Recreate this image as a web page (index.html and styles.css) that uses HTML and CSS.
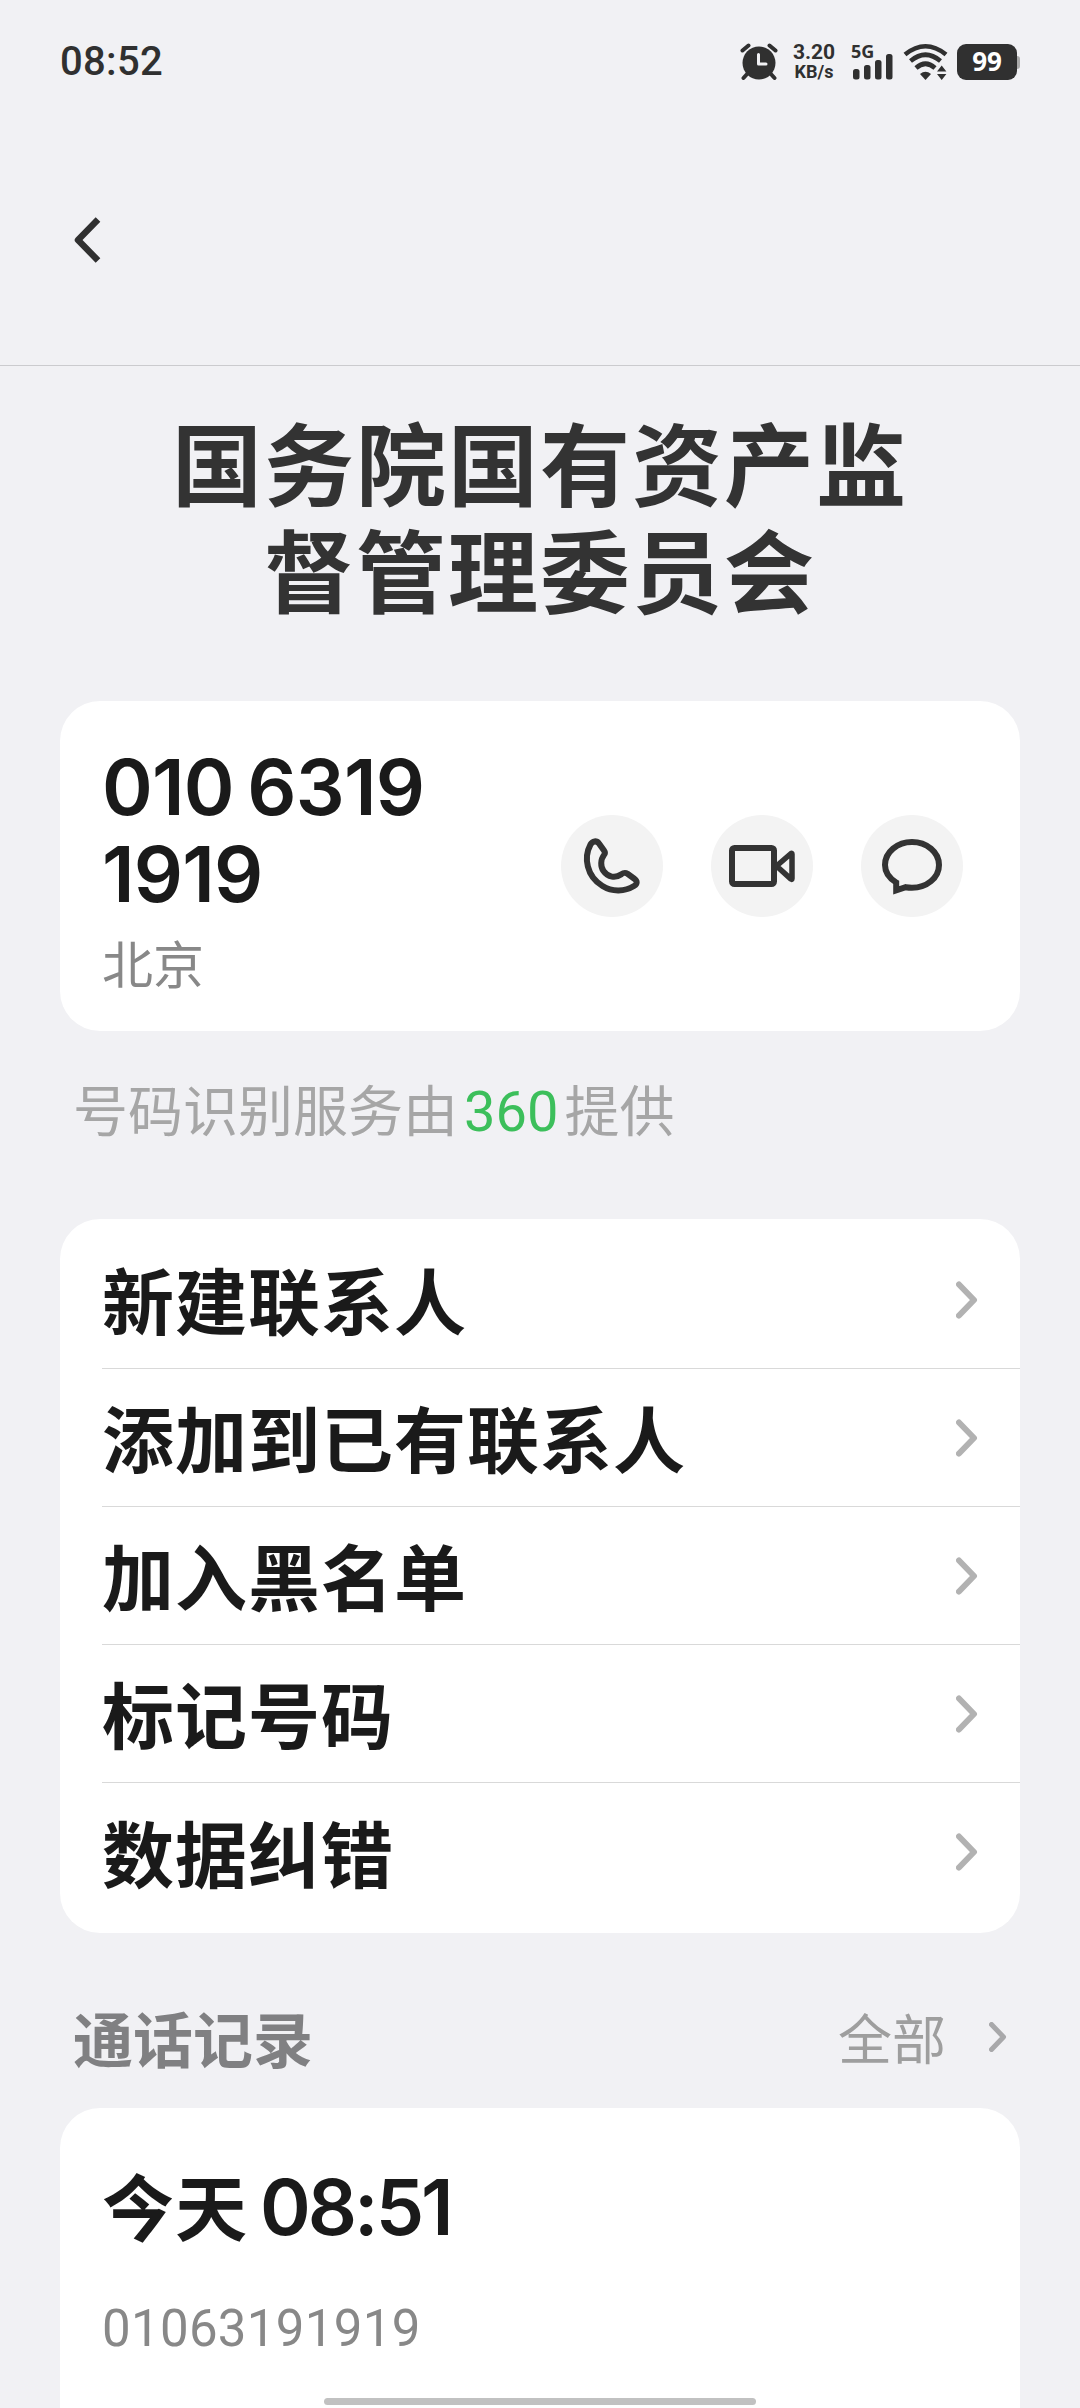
FILE: index.html
```html
<!DOCTYPE html>
<html lang="zh-CN">
<head>
  <meta charset="UTF-8">
  <meta name="viewport" content="width=device-width, initial-scale=1.0">
  <title>联系人详情</title>
  <link rel="stylesheet" href="styles.css">
</head>
<body>
  <div class="screen">

    <div class="status-bar">
      <span class="status-time">08:52</span>
      <div class="status-icons">
        <svg class="alarm-icon" viewBox="0 0 38 38">
          <circle cx="19" cy="20" r="16.500" fill="#303030"/>
          <path d="M2.500 7.500l6-5M35.500 7.500l-6-5M8 30l-4.500 5M30 30l4.500 5" stroke="#303030" stroke-width="4" stroke-linecap="round"/>
          <path d="M18.500 11.500v9.500h7.500" fill="none" stroke="#f1f1f4" stroke-width="3" stroke-linecap="round" stroke-linejoin="round"/>
        </svg>
        <div class="net-speed">
          <span class="speed-value">3.20</span>
          <span class="speed-unit">KB/s</span>
        </div>
        <div class="signal">
          <span class="signal-type">5G</span>
          <svg class="signal-icon" viewBox="0 0 44 38" fill="#303030">
            <rect x="2" y="26" width="6.500" height="10.500" rx="2.500"/>
            <rect x="13" y="22" width="6.500" height="14.500" rx="2.500"/>
            <rect x="24" y="17" width="6.500" height="19.500" rx="2.500"/>
            <rect x="35" y="11" width="6.500" height="25.500" rx="2.500"/>
          </svg>
        </div>
        <svg class="wifi-icon" viewBox="0 0 46 38">
          <g fill="none" stroke="#303030" stroke-width="4.600">
            <path d="M2 11.500Q22.500-5 43 11.500"/>
            <path d="M7.500 18Q22.500 5.500 37.500 18"/>
            <path d="M13 25Q22.500 16.500 32 25"/>
          </g>
          <path d="M17 31q5.500-4.500 11 0l-5.500 6z" fill="#303030"/>
          <path d="M34 28.500l4.700-6 4.700 6zM34 31l4.700 6 4.700-6z" fill="#303030"/>
        </svg>
        <div class="battery">
          <span class="battery-level">99</span>
          <span class="battery-tip"></span>
        </div>
      </div>
    </div>

    <div class="nav-bar">
      <svg class="back-icon" viewBox="0 0 30 48">
        <path d="M25 3.500L5 24l20 20.500" fill="none" stroke="#303030" stroke-width="6.500" stroke-linejoin="round"/>
      </svg>
    </div>

    <h1 class="contact-name">国务院国有资产监<br>督管理委员会</h1>

    <div class="card phone-card">
      <div class="phone-info">
        <div class="phone-number">010 6319<br>1919</div>
        <div class="phone-area">北京</div>
      </div>
      <div class="phone-actions">
        <button class="action-button" aria-label="拨打电话">
          <svg viewBox="0 0 102 102">
            <path d="M29.500 29.500C31.500 25.800 35.500 25.300 38 28.500L43 35.500C44.300 37.300 44.200 38.500 43 40C39.500 44.500 39.300 51.500 42.500 56C47 62.500 54.500 63.300 60 59.500C62.500 57.700 64 57.200 66.500 58.800L73 63.500C76.500 66 76.600 68.800 73 71C64 76.500 51.500 77.300 41.500 71C25.500 61.500 22.500 42.500 29.500 29.500Z"/>
          </svg>
        </button>
        <button class="action-button" aria-label="视频通话">
          <svg viewBox="0 0 102 102">
            <rect x="21" y="33" width="42" height="36" rx="2.500"/>
            <path d="M65.500 51L80 38.500q1-.700 1 .600V63.500q0 1.300-1 .600z" stroke-width="5.500"/>
          </svg>
        </button>
        <button class="action-button" aria-label="发送短信">
          <svg viewBox="0 0 102 102">
            <path d="M51 27C65.500 27 78 37 78 50C78 63 65.500 72.700 51 72.700C48.500 72.700 46.500 72.500 44.800 72.200L35.200 75.400V67.500C28.500 63.300 24 57.500 24 50C24 37 36.500 27 51 27Z" stroke-linejoin="miter"/>
          </svg>
        </button>
      </div>
    </div>

    <p class="provider">号码识别服务由<span class="provider-name">360</span>提供</p>

    <ul class="card menu">
      <li class="menu-item">
        <span class="menu-label">新建联系人</span>
        <svg class="chevron" viewBox="0 0 22 38"><path d="M3 3.500L18 19 3 34.500"/></svg>
      </li>
      <li class="menu-item">
        <span class="menu-label">添加到已有联系人</span>
        <svg class="chevron" viewBox="0 0 22 38"><path d="M3 3.500L18 19 3 34.500"/></svg>
      </li>
      <li class="menu-item">
        <span class="menu-label">加入黑名单</span>
        <svg class="chevron" viewBox="0 0 22 38"><path d="M3 3.500L18 19 3 34.500"/></svg>
      </li>
      <li class="menu-item">
        <span class="menu-label">标记号码</span>
        <svg class="chevron" viewBox="0 0 22 38"><path d="M3 3.500L18 19 3 34.500"/></svg>
      </li>
      <li class="menu-item">
        <span class="menu-label">数据纠错</span>
        <svg class="chevron" viewBox="0 0 22 38"><path d="M3 3.500L18 19 3 34.500"/></svg>
      </li>
    </ul>

    <div class="section-header">
      <h2 class="section-title">通话记录</h2>
      <div class="section-more">全部<svg class="chevron small" viewBox="0 0 18 30"><path d="M2.500 2.500L14.500 15 2.500 27.500"/></svg></div>
    </div>

    <div class="card call-card">
      <div class="call-time">今天<span class="call-clock">08:51</span></div>
      <div class="call-number">01063191919</div>
    </div>

    <div class="home-indicator"></div>
  </div>
</body>
</html>
```

FILE: styles.css
```css
* {
  box-sizing: border-box;
  margin: 0;
  padding: 0;
}
body {
  background-color: #f1f1f4;
  font-family: "Noto Sans CJK SC", sans-serif;
}
.screen {
  position: relative;
  width: 1080px;
  height: 2408px;
  overflow: hidden;
}

/* 状态栏 */
.status-bar {
  display: flex;
  justify-content: space-between;
  align-items: center;
  height: 124px;
  padding: 0 60px;
  color: #303030;
  font-family: Roboto, sans-serif;
}
.status-time {
  font-size: 40px;
  font-weight: 500;
  line-height: 48px;
  letter-spacing: 0.3px;
}
.status-icons {
  display: flex;
  align-items: center;
}
.alarm-icon {
  width: 38px;
  height: 38px;
  margin-right: 14px;
}
.net-speed {
  display: flex;
  flex-direction: column;
  align-items: center;
  width: 44px;
  margin-right: 15px;
  font-weight: 700;
}
.speed-value {
  font-size: 21px;
  line-height: 20px;
}
.speed-unit {
  font-size: 18px;
  line-height: 20px;
}
.signal {
  position: relative;
  width: 44px;
  height: 38px;
  margin-right: 8px;
}
.signal-type {
  position: absolute;
  top: 0;
  left: 0;
  font-family: "Noto Sans", sans-serif;
  font-size: 18px;
  font-weight: 700;
  line-height: 16px;
}
.signal-icon {
  display: block;
  width: 44px;
  height: 38px;
}
.wifi-icon {
  width: 46px;
  height: 38px;
  margin-right: 8px;
}
.battery {
  display: flex;
  align-items: center;
  width: 63px;
}
.battery-level {
  width: 60px;
  height: 36px;
  border-radius: 9px;
  background-color: #303030;
  color: #fff;
  font-family: "Noto Sans", sans-serif;
  font-size: 26px;
  font-weight: 700;
  line-height: 35px;
  text-align: center;
}
.battery-tip {
  width: 3px;
  height: 13px;
  border-radius: 0 3px 3px 0;
  background-color: #aaa;
}

/* 标题栏 */
.nav-bar {
  display: flex;
  align-items: center;
  height: 242px;
  padding: 0 73px 10px;
  border-bottom: 1px solid #cbcbce;
}
.back-icon {
  width: 30px;
  height: 48px;
}
.contact-name {
  margin-top: 41px;
  color: #333;
  font-size: 90px;
  font-weight: 700;
  line-height: 107px;
  letter-spacing: 2px;
  text-align: center;
}

.card {
  margin: 0 60px;
  border-radius: 40px;
  background-color: #fff;
}

/* 号码卡片 */
.phone-card {
  display: flex;
  justify-content: space-between;
  align-items: center;
  height: 330px;
  margin-top: 80px;
  padding: 0 57px 0 42px;
}
.phone-number {
  padding-top: 7px;
  color: #1a1a1a;
  font-family: Inter, sans-serif;
  font-size: 77px;
  font-weight: 600;
  line-height: 87px;
  letter-spacing: -0.8px;
  word-spacing: -5px;
}
.phone-area {
  margin-top: 11px;
  color: #888;
  font-size: 51px;
  line-height: 66px;
}
.phone-actions {
  display: flex;
  gap: 48px;
}
.action-button {
  width: 102px;
  height: 102px;
  border: none;
  border-radius: 50%;
  background-color: #f3f3f3;
}
.action-button svg {
  display: block;
  width: 102px;
  height: 102px;
  fill: none;
  stroke: #333;
  stroke-width: 6;
  stroke-linejoin: round;
}
.provider {
  height: 72px;
  margin: 40px 73px 0;
  color: #a6a6a6;
  font-size: 55px;
  line-height: 72px;
}
.provider-name {
  margin: 0 6px;
  color: #3cbf5b;
  font-family: Roboto, sans-serif;
  font-size: 56px;
  line-height: 1;
}

/* 操作列表 */
.menu {
  margin-top: 76px;
  padding: 12px 0 12px 42px;
  list-style: none;
}
.menu-item {
  display: flex;
  justify-content: space-between;
  align-items: center;
  height: 138px;
  padding-right: 42px;
  border-bottom: 1px solid #d9d9d9;
}
.menu-item:last-child {
  border-bottom: none;
}
.menu-label {
  padding-bottom: 4px;
  color: #1a1a1a;
  font-size: 72px;
  font-weight: 700;
  line-height: 97px;
  letter-spacing: 1px;
}
.chevron {
  width: 22px;
  height: 38px;
  fill: none;
  stroke: #b2b2b2;
  stroke-width: 6;
  stroke-linejoin: round;
  stroke-linecap: round;
}
.chevron.small {
  width: 18px;
  height: 30px;
  margin-left: 43px;
  stroke: #a8a8aa;
  stroke-width: 5;
}

/* 通话记录 */
.section-header {
  display: flex;
  justify-content: space-between;
  align-items: center;
  height: 175px;
  padding: 33px 73px 0;
}
.section-title {
  color: #808082;
  font-size: 60px;
  font-weight: 700;
  line-height: 80px;
}
.section-more {
  display: flex;
  align-items: center;
  color: #9e9e9e;
  font-size: 54px;
  line-height: 80px;
}
.call-card {
  height: 400px;
  padding: 46px 42px;
}
.call-time {
  height: 100px;
  color: #1a1a1a;
  font-size: 72px;
  font-weight: 700;
  line-height: 100px;
  letter-spacing: 1px;
}
.call-clock {
  margin-left: 12px;
  font-family: Inter, sans-serif;
  font-size: 77px;
  font-weight: 600;
  line-height: 1;
  letter-spacing: -3px;
}
.call-number {
  margin-top: 40px;
  color: #888;
  font-family: Roboto, sans-serif;
  font-size: 51px;
  line-height: 70px;
  letter-spacing: 0.3px;
}
.home-indicator {
  position: absolute;
  left: 324px;
  bottom: 3px;
  width: 432px;
  height: 7px;
  border-radius: 4px;
  background-color: #c1c1c1;
}
```
